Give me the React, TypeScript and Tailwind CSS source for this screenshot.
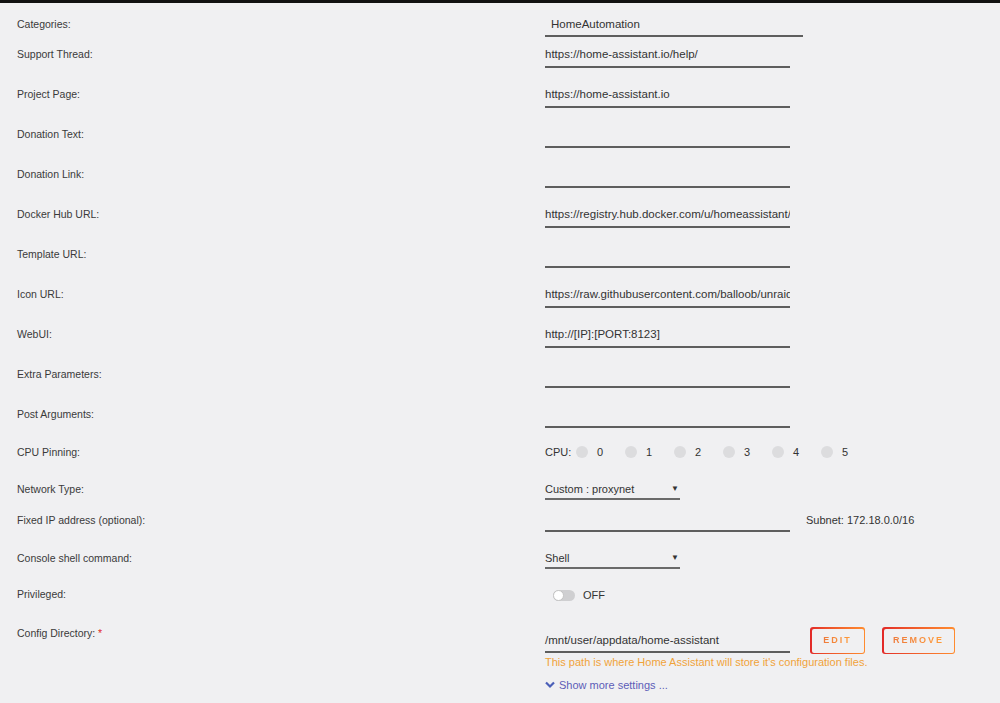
import React from "react";

const textRows: { label: string; value: string }[] = [
  { label: "Support Thread:", value: "https://home-assistant.io/help/" },
  { label: "Project Page:", value: "https://home-assistant.io" },
  { label: "Donation Text:", value: "" },
  { label: "Donation Link:", value: "" },
  { label: "Docker Hub URL:", value: "https://registry.hub.docker.com/u/homeassistant/home-assistant/" },
  { label: "Template URL:", value: "" },
  { label: "Icon URL:", value: "https://raw.githubusercontent.com/balloob/unraid-docker-templates/master/home-assistant.png" },
  { label: "WebUI:", value: "http://[IP]:[PORT:8123]" },
  { label: "Extra Parameters:", value: "" },
];

function Label({ children }: { children: React.ReactNode }) {
  return <div className="w-[545px] shrink-0 pl-[17px] text-[10.5px] leading-4 text-[#3a3a3a]">{children}</div>;
}

function TextInput({ value, width = "w-[245px]" }: { value: string; width?: string }) {
  return (
    <div className={`${width} h-[22px] overflow-hidden whitespace-nowrap border-b-2 border-[#5e5e5e] pb-[4px] text-[11.5px] leading-4 text-[#333]`}>
      {value}
    </div>
  );
}

function GradientButton({ label, width }: { label: string; width: string }) {
  return (
    <div className={`${width} h-[27px] rounded-[3px] bg-linear-to-r from-[#e22828] to-[#ff8c2f] p-[1.5px]`}>
      <div className="flex h-full w-full items-center justify-center rounded-[2px] bg-[#f0f0f2]">
        <span className="bg-linear-to-r from-[#ee7a3a] to-[#ff9c3a] bg-clip-text text-[9px] font-bold tracking-[2px] text-transparent">
          {label}
        </span>
      </div>
    </div>
  );
}

export default function App() {
  return (
    <div className="min-h-[703px] w-[1000px] bg-[#f0f0f2] text-[11px] font-['Liberation_Sans',Arial,sans-serif]">
      <div className="h-[3px] bg-[#111]" />
      <div className="pt-[13px]">
        {/* Categories */}
        <div className="flex h-[30px] items-start">
          <Label>Categories:</Label>
          <div className="h-[21px] w-[258px] border-b-2 border-[#5e5e5e] pl-[6px] text-[11.5px] leading-4 text-[#333]">HomeAutomation</div>
        </div>

        {textRows.map((r) => (
          <div key={r.label} className="flex h-10 items-start">
            <Label>{r.label}</Label>
            <TextInput value={r.value} />
          </div>
        ))}

        <div className="flex h-[38px] items-start">
          <Label>Post Arguments:</Label>
          <TextInput value="" />
        </div>

        {/* CPU pinning */}
        <div className="flex h-[37px] items-start">
          <Label>CPU Pinning:</Label>
          <div className="flex items-center leading-4 text-[#333]">
            <span className="mr-[8px] w-[23px]">CPU:</span>
            {[0, 1, 2, 3, 4, 5].map((n) => (
              <div key={n} className="flex w-[49px] items-center">
                <span className="h-[12px] w-[12px] rounded-full bg-[#dcdcde]" />
                <span className="ml-[9px]">{n}</span>
              </div>
            ))}
          </div>
        </div>

        {/* Network type */}
        <div className="flex h-[31px] items-start">
          <Label>Network Type:</Label>
          <div className="flex h-[19px] w-[135px] items-start justify-between border-b-2 border-[#6a6a6a] leading-4 text-[#333]">
            <span>Custom : proxynet</span>
            <span className="pr-[1px] text-[8px] leading-4">▼</span>
          </div>
        </div>

        {/* Fixed IP */}
        <div className="flex h-[38px] items-start">
          <Label>Fixed IP address (optional):</Label>
          <div className="h-[20px] w-[245px] border-b-2 border-[#5e5e5e]" />
          <span className="ml-[16px] leading-4 text-[#333]">Subnet: 172.18.0.0/16</span>
        </div>

        {/* Console shell */}
        <div className="flex h-[36px] items-start">
          <Label>Console shell command:</Label>
          <div className="flex h-[19px] w-[135px] items-start justify-between border-b-2 border-[#6a6a6a] leading-4 text-[#333]">
            <span>Shell</span>
            <span className="pr-[1px] text-[8px] leading-4">▼</span>
          </div>
        </div>

        {/* Privileged */}
        <div className="flex h-[39px] items-start">
          <Label>Privileged:</Label>
          <div className="flex items-center pl-[8px] pt-[1px]">
            <div className="relative h-[11px] w-[22px] rounded-full bg-[#cfcfd1]">
              <span className="absolute left-0 top-0 h-[11px] w-[11px] rounded-full border border-[#c4c4c4] bg-white" />
            </div>
            <span className="ml-[8px] leading-4 text-[#333]">OFF</span>
          </div>
        </div>

        {/* Config directory */}
        <div className="flex items-start">
          <Label>
            Config Directory: <span className="text-[#e22828]">*</span>
          </Label>
          <div className="flex flex-col">
            <div className="flex items-start">
              <div className="pt-[7px]">
                <div className="h-[21px] w-[245px] border-b-2 border-[#5e5e5e] pb-[3px] text-[11.5px] leading-4 text-[#333]">
                  /mnt/user/appdata/home-assistant
                </div>
              </div>
              <div className="ml-[20px] mt-[2px] flex gap-[17px]">
                <GradientButton label="EDIT" width="w-[55px]" />
                <GradientButton label="REMOVE" width="w-[73px]" />
              </div>
            </div>
            <div className="mt-[1px] leading-[14px] text-[#f0a33a]">
              This path is where Home Assistant will store it's configuration files.
            </div>
            <div className="mt-[9px] flex items-center leading-[14px] text-[#5d5db8]">
              <svg width="10" height="8" viewBox="0 0 10 8" className="mr-[4px]">
                <path d="M1 1.5 L5 5.5 L9 1.5" fill="none" stroke="#4b5fb8" strokeWidth="2.2" />
              </svg>
              <span>Show more settings ...</span>
            </div>
          </div>
        </div>
      </div>
    </div>
  );
}
